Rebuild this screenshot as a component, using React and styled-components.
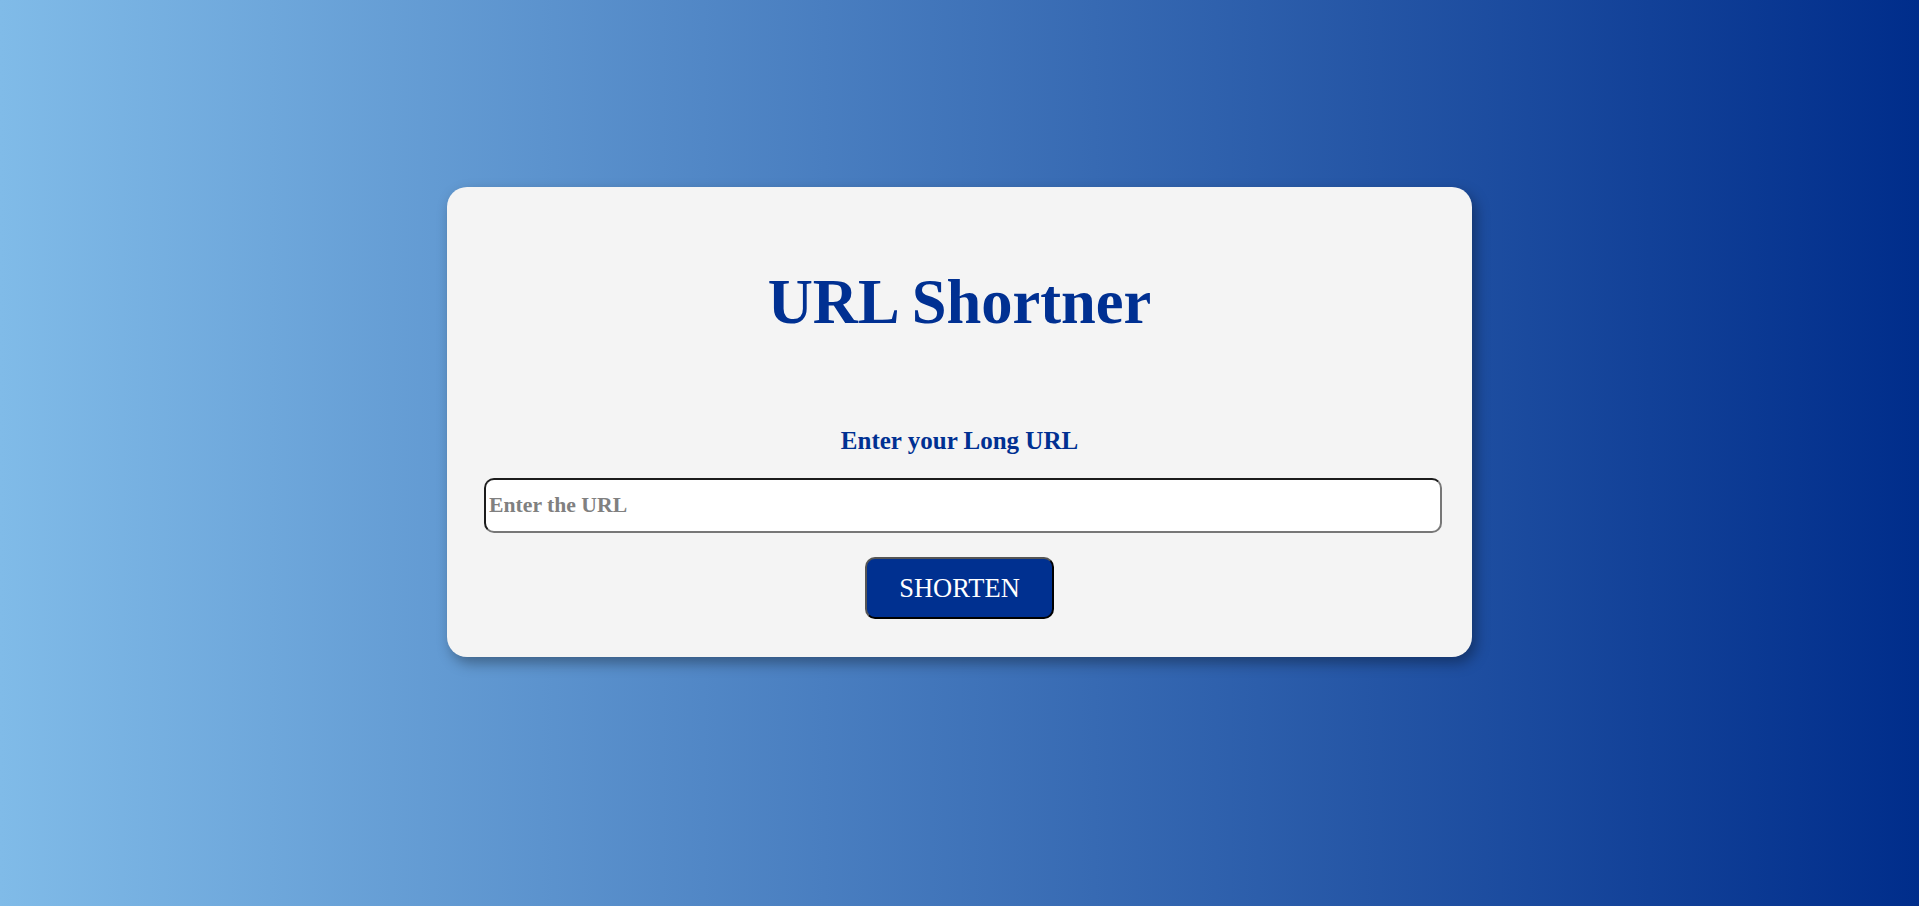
import React from "react";
import styled, { createGlobalStyle } from "styled-components";

const GlobalStyle = createGlobalStyle`
  html, body {
    margin: 0;
    padding: 0;
  }
  body {
    font-family: "Liberation Serif", "Times New Roman", serif;
    background: linear-gradient(to right, #80bbe8, #002d8b);
    min-height: 906px;
  }
`;

export default function App() {
  return (
    <>
      <GlobalStyle />
      <Page>
        <Card>
          <Title>URL Shortner</Title>
          <Label htmlFor="url">Enter your Long URL</Label>
          <UrlInput id="url" type="text" placeholder="Enter the URL" />
          <ShortenButton type="button">SHORTEN</ShortenButton>
        </Card>
      </Page>
    </>
  );
}

const Page = styled.main`
  min-height: 906px;
  padding-top: 187px;
  box-sizing: border-box;
  display: flex;
  flex-direction: column;
  align-items: center;
`;

const Card = styled.section`
  width: 1025px;
  height: 470px;
  box-sizing: border-box;
  padding: 81px 30px 0;
  background-color: #f4f4f4;
  border-radius: 20px;
  box-shadow: 4px 6px 14px rgba(0, 0, 0, 0.35);
  display: flex;
  flex-direction: column;
  align-items: center;
`;

const Title = styled.h1`
  margin: 0;
  font-size: 62.5px;
  line-height: 68px;
  font-weight: 700;
  color: #003092;
`;

const Label = styled.label`
  margin: 91px 0 0;
  font-size: 25px;
  line-height: 27px;
  font-weight: 700;
  color: #003092;
`;

const UrlInput = styled.input`
  margin-top: 24px;
  align-self: flex-end;
  width: calc(100% - 7px);
  height: 55px;
  box-sizing: border-box;
  padding: 0 3px;
  border: 2px solid;
  border-color: #1c1c1c #777 #777 #1c1c1c;
  border-radius: 10px;
  background: #fff;
  font-family: "Liberation Serif", "Times New Roman", serif;
  font-size: 21.7px;
  font-weight: 700;
  color: #222;
  outline: none;

  &::placeholder {
    color: #808080;
  }
`;

const ShortenButton = styled.button`
  margin-top: 24px;
  height: 62px;
  box-sizing: border-box;
  padding: 0 32px;
  border: 2px solid;
  border-color: #555 #000 #000 #555;
  border-radius: 10px;
  background-color: #003090;
  color: #fff;
  font-family: "Liberation Serif", "Times New Roman", serif;
  font-size: 26.5px;
  cursor: pointer;
`;
